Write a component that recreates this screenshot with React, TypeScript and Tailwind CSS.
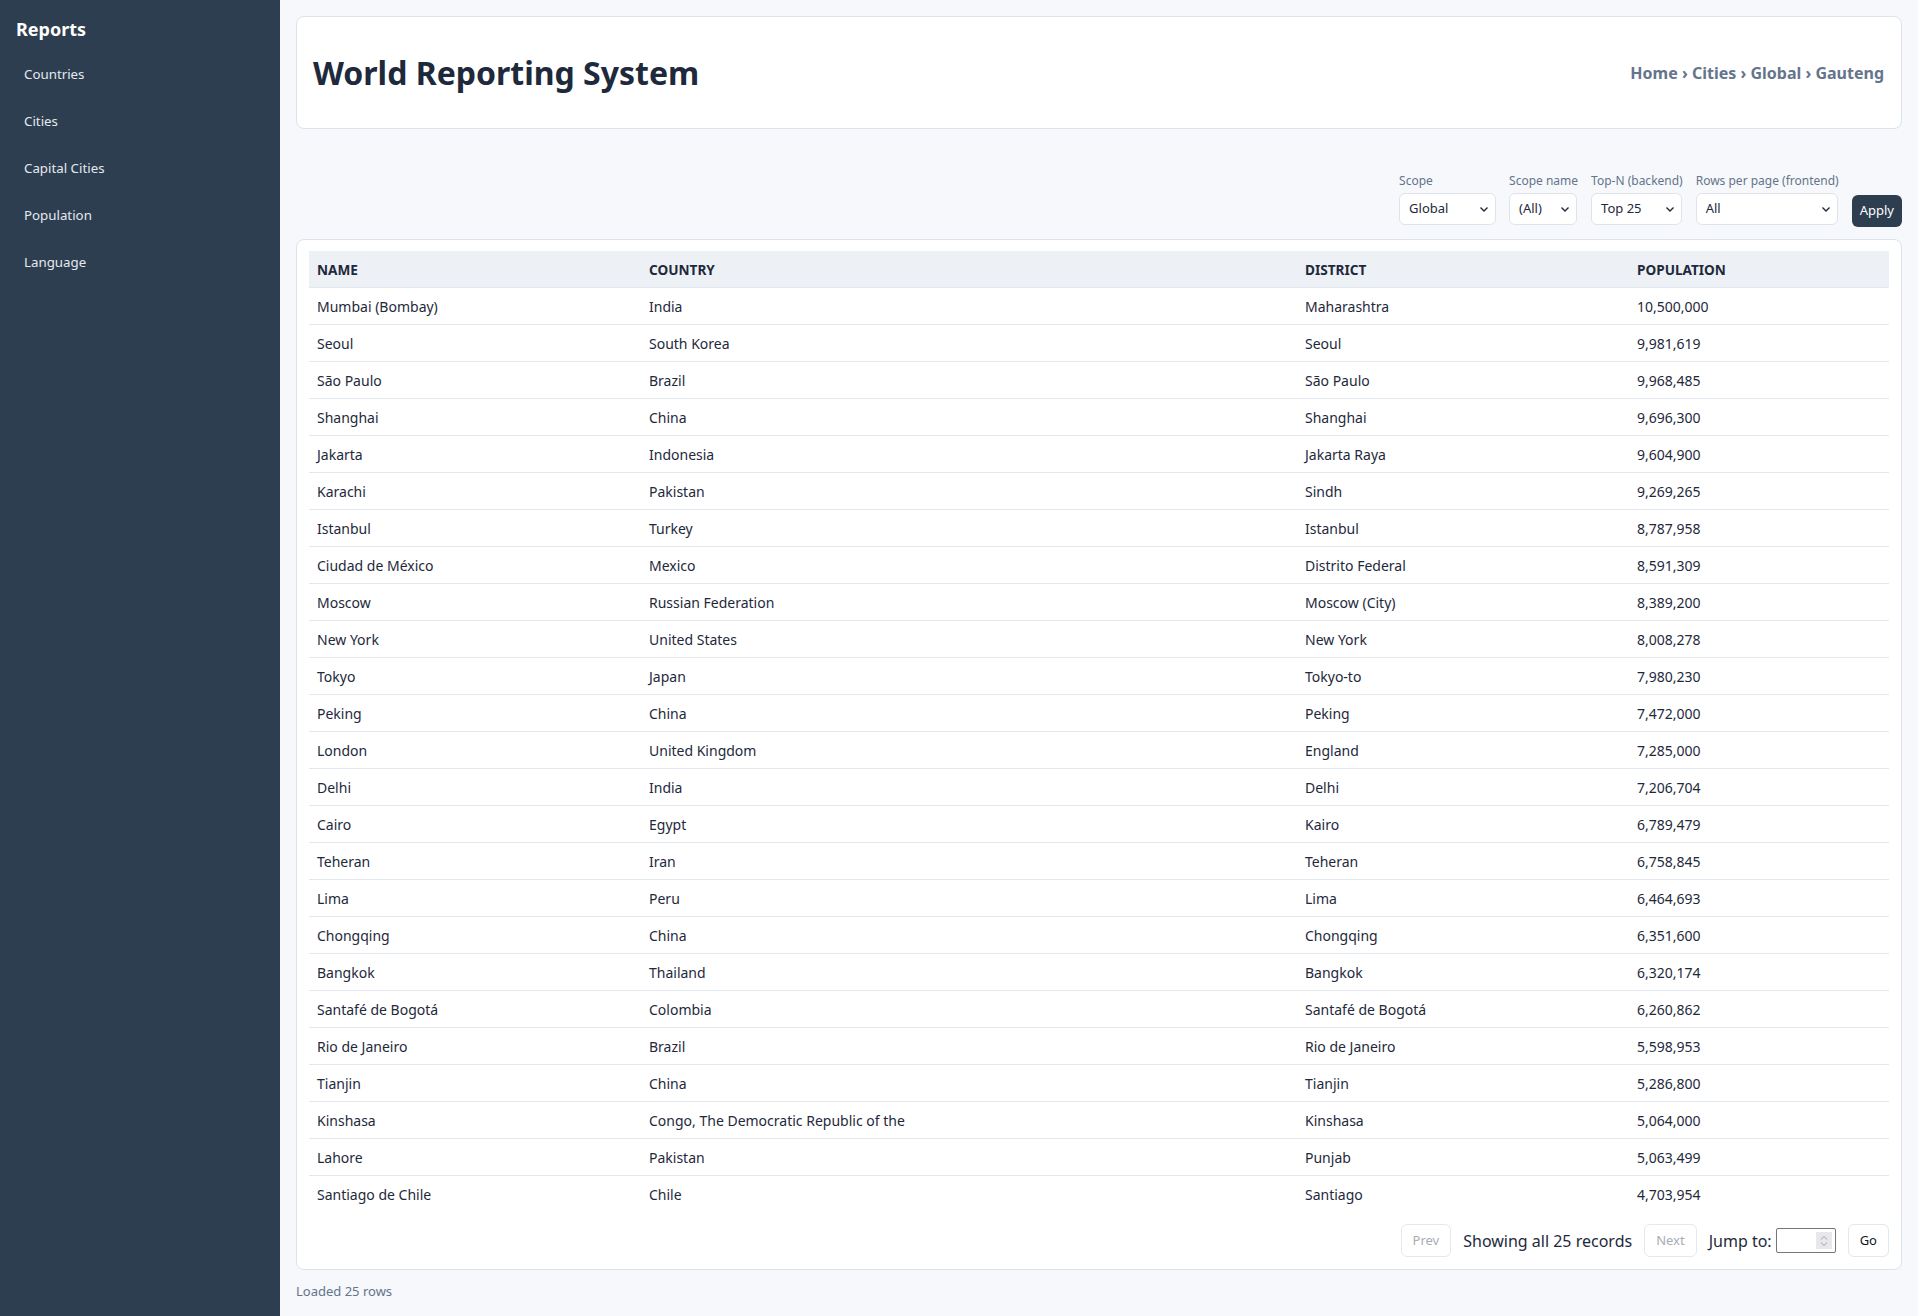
import React from "react";

const rows: [string, string, string, string][] = [
  ["Mumbai (Bombay)", "India", "Maharashtra", "10,500,000"],
  ["Seoul", "South Korea", "Seoul", "9,981,619"],
  ["São Paulo", "Brazil", "São Paulo", "9,968,485"],
  ["Shanghai", "China", "Shanghai", "9,696,300"],
  ["Jakarta", "Indonesia", "Jakarta Raya", "9,604,900"],
  ["Karachi", "Pakistan", "Sindh", "9,269,265"],
  ["Istanbul", "Turkey", "Istanbul", "8,787,958"],
  ["Ciudad de México", "Mexico", "Distrito Federal", "8,591,309"],
  ["Moscow", "Russian Federation", "Moscow (City)", "8,389,200"],
  ["New York", "United States", "New York", "8,008,278"],
  ["Tokyo", "Japan", "Tokyo-to", "7,980,230"],
  ["Peking", "China", "Peking", "7,472,000"],
  ["London", "United Kingdom", "England", "7,285,000"],
  ["Delhi", "India", "Delhi", "7,206,704"],
  ["Cairo", "Egypt", "Kairo", "6,789,479"],
  ["Teheran", "Iran", "Teheran", "6,758,845"],
  ["Lima", "Peru", "Lima", "6,464,693"],
  ["Chongqing", "China", "Chongqing", "6,351,600"],
  ["Bangkok", "Thailand", "Bangkok", "6,320,174"],
  ["Santafé de Bogotá", "Colombia", "Santafé de Bogotá", "6,260,862"],
  ["Rio de Janeiro", "Brazil", "Rio de Janeiro", "5,598,953"],
  ["Tianjin", "China", "Tianjin", "5,286,800"],
  ["Kinshasa", "Congo, The Democratic Republic of the", "Kinshasa", "5,064,000"],
  ["Lahore", "Pakistan", "Punjab", "5,063,499"],
  ["Santiago de Chile", "Chile", "Santiago", "4,703,954"],
];

const navItems = ["Countries", "Cities", "Capital Cities", "Population", "Language"];

function Chevron() {
  return (
    <svg width="10" height="10" viewBox="0 0 10 10" className="shrink-0">
      <path d="M1.5 3.5 L5 7 L8.5 3.5" fill="none" stroke="#1f2937" strokeWidth="1.4" />
    </svg>
  );
}

function FakeSelect({ label, value, width }: { label: string; value: string; width: string }) {
  return (
    <div className="flex flex-col">
      <span className="text-[12px] leading-[18px] text-[#64748b] mt-px mb-[3px] whitespace-nowrap">{label}</span>
      <div
        className={`${width} h-[32px] mb-[2px] flex items-center justify-between pl-[9px] pr-[6px] bg-white border border-[#dfe4ea] rounded-md text-[13px] text-[#1e293b]`}
      >
        <span>{value}</span>
        <Chevron />
      </div>
    </div>
  );
}

export default function App() {
  return (
    <div
      className="flex min-h-screen bg-[#f6f8fb] text-[#1e293b]"
      style={{ fontFamily: '"Noto Sans", "Open Sans", sans-serif' }}
    >
      <aside className="w-[280px] shrink-0 bg-[#2d3e50] text-white">
        <div className="pl-4 pt-[17px] text-[18px] font-bold leading-[24px]">Reports</div>
        <nav className="mt-[10px] flex flex-col">
          {navItems.map((n) => (
            <div key={n} className="h-[47px] flex items-center pl-6 text-[13.3px] text-[#e5e9ef]">
              {n}
            </div>
          ))}
        </nav>
      </aside>

      <main className="flex-1 px-4 pt-4">
        <header className="h-[113px] flex items-center justify-between bg-white border border-[#dde3ea] rounded-lg pl-4 pr-[17px]">
          <h1 className="text-[32px] font-bold text-[#1e293b] leading-none">World Reporting System</h1>
          <div className="text-[16px] font-bold text-[#64748b]">Home › Cities › Global › Gauteng</div>
        </header>

        <div className="mt-[42px] flex justify-end items-end gap-[13px]">
          <FakeSelect label="Scope" value="Global" width="w-[97px]" />
          <FakeSelect label="Scope name" value="(All)" width="w-[68px]" />
          <FakeSelect label="Top-N (backend)" value="Top 25" width="w-[91px]" />
          <FakeSelect label="Rows per page (frontend)" value="All" width="w-[142px]" />
          <button className="h-[32px] px-2 rounded-md bg-[#2c3e50] text-white text-[13px]">Apply</button>
        </div>

        <section className="mt-3 bg-white border border-[#dde3ea] rounded-lg px-3 pt-[11px] pb-3">
          <table className="w-full border-separate border-spacing-0 text-[14px]">
            <colgroup>
              <col className="w-[332px]" />
              <col className="w-[656px]" />
              <col className="w-[332px]" />
              <col />
            </colgroup>
            <thead>
              <tr>
                {["NAME", "COUNTRY", "DISTRICT", "POPULATION"].map((h) => (
                  <th
                    key={h}
                    className="h-[36px] px-2 pt-[2px] pb-0 text-left bg-[#edf1f6] text-[13.6px] font-bold text-[#1e293b]"
                  >
                    {h}
                  </th>
                ))}
              </tr>
            </thead>
            <tbody>
              {rows.map((r) => (
                <tr key={r[0]}>
                  {r.map((c, i) => (
                    <td key={i} className="h-[37px] px-2 py-0 border-t border-[#e2e8f0] text-[#1e293b]">
                      {c}
                    </td>
                  ))}
                </tr>
              ))}
            </tbody>
          </table>

          <div className="mt-3 flex justify-end items-center gap-3">
            <button className="h-[33px] px-[11px] border border-[#e5e9ef] rounded-md text-[13px] text-[#a8adb5]">
              Prev
            </button>
            <span className="text-[16px] text-[#1e293b]">Showing all 25 records</span>
            <button className="h-[33px] px-[11px] border border-[#e5e9ef] rounded-md text-[13px] text-[#a8adb5]">
              Next
            </button>
            <div className="flex items-center gap-1">
              <span className="text-[16px] text-[#1e293b]">Jump to:</span>
              <div className="w-[60px] h-[25px] border border-[#767676] rounded-[2px] bg-white flex items-center justify-end pr-[3px]">
                <div className="w-[16px] h-[17px] bg-[#e8e8ec] flex flex-col items-center justify-center">
                  <svg width="8" height="12" viewBox="0 0 8 12">
                    <path d="M1 4.5 L4 1.5 L7 4.5 M1 7.5 L4 10.5 L7 7.5" fill="none" stroke="#9ca0a8" strokeWidth="1" />
                  </svg>
                </div>
              </div>
            </div>
            <button className="h-[33px] px-[11px] border border-[#e2e8f0] rounded-md text-[13px] text-[#111827] bg-white">
              Go
            </button>
          </div>
        </section>

        <div className="mt-3 text-[13px] text-[#64748b] leading-[18px]">Loaded 25 rows</div>
      </main>
    </div>
  );
}
